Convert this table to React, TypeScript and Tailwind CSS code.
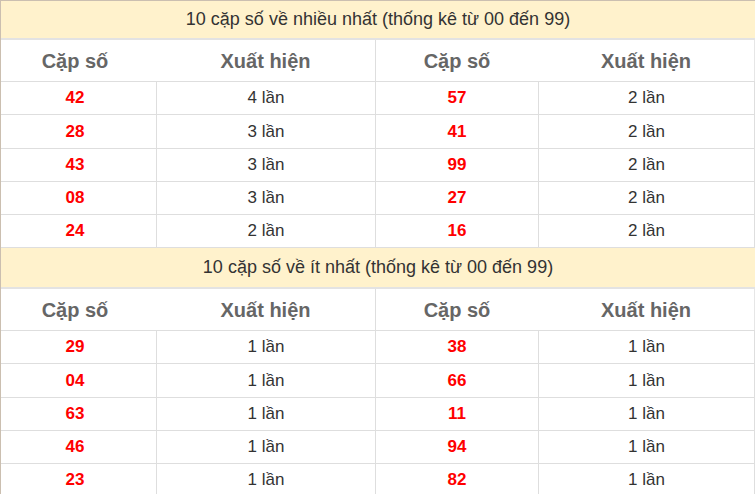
const top = [
  ['42', '4', '57', '2'],
  ['28', '3', '41', '2'],
  ['43', '3', '99', '2'],
  ['08', '3', '27', '2'],
  ['24', '2', '16', '2'],
];

const bottom = [
  ['29', '1', '38', '1'],
  ['04', '1', '66', '1'],
  ['63', '1', '11', '1'],
  ['46', '1', '94', '1'],
  ['23', '1', '82', '1'],
];

function Section({ title, rows, first }: { title: string; rows: string[][]; first?: boolean }) {
  return (
    <div>
      <div
        className={`${first ? 'h-[39px]' : 'h-[41px]'} bg-[#fff2cc] border-b-2 border-[#e3e3e3] flex items-center justify-center text-[18px] text-[#333]`}
      >
        {title}
      </div>
      <div className="grid grid-cols-[155px_219px_163px_1fr] h-[42px] border-b border-[#dedede] text-[20px] font-bold text-[#666]">
        <div className="flex items-center justify-center pr-[7px]">Cặp số</div>
        <div className="flex items-center justify-center">Xuất hiện</div>
        <div className="flex items-center justify-center border-l border-[#dedede]">Cặp số</div>
        <div className="flex items-center justify-center border-r border-[#e6e6e6]">Xuất hiện</div>
      </div>
      {rows.map((r, i) => (
        <div
          key={i}
          className={`grid grid-cols-[155px_219px_163px_1fr] ${i === 1 ? 'h-[34px]' : 'h-[33px]'} border-b border-[#dedede] text-[17px]`}
        >
          <div className="flex items-center justify-center pr-[7px] font-bold text-[#ff0000]">{r[0]}</div>
          <div className="flex items-center justify-center border-l border-[#dedede] text-[#333]">{r[1]} lần</div>
          <div className="flex items-center justify-center border-l border-[#dedede] font-bold text-[#ff0000]">{r[2]}</div>
          <div className="flex items-center justify-center border-l border-r border-[#dedede] text-[#333]">{r[3]} lần</div>
        </div>
      ))}
    </div>
  );
}

export default function App() {
  return (
    <div className="w-[755px] h-[494px] overflow-hidden bg-white" style={{ fontFamily: '"Liberation Sans", Arial, sans-serif' }}>
      <div className="border-l border-t border-[#cbbfb0]">
        <Section first title="10 cặp số về nhiều nhất (thống kê từ 00 đến 99)" rows={top} />
        <Section title="10 cặp số về ít nhất (thống kê từ 00 đến 99)" rows={bottom} />
      </div>
    </div>
  );
}
